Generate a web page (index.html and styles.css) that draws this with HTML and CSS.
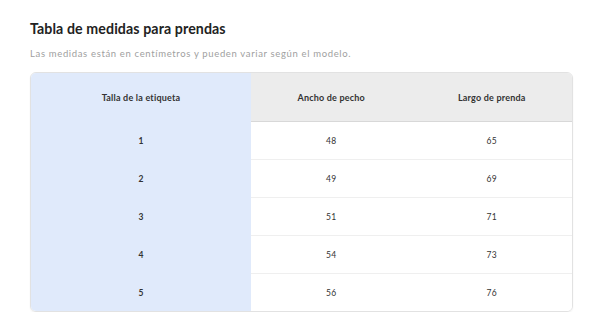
FILE: index.html
```html
<!DOCTYPE html>
<html lang="es">
<head>
<meta charset="utf-8">
<link rel="stylesheet" href="styles.css">
</head>
<body>
<div class="page">
  <h1 class="title">Tabla de medidas para prendas</h1>
  <p class="subtitle">Las medidas están en centímetros y pueden variar según el modelo.</p>
  <div class="table">
    <div class="cell head first">Talla de la etiqueta</div>
    <div class="cell head">Ancho de pecho</div>
    <div class="cell head">Largo de prenda</div>

    <div class="cell first">1</div><div class="cell">48</div><div class="cell">65</div>
    <div class="cell first">2</div><div class="cell">49</div><div class="cell">69</div>
    <div class="cell first">3</div><div class="cell">51</div><div class="cell">71</div>
    <div class="cell first">4</div><div class="cell">54</div><div class="cell">73</div>
    <div class="cell first last">5</div><div class="cell last">56</div><div class="cell last">76</div>
  </div>
</div>
</body>
</html>
```
FILE: styles.css
```css
html, body {
  margin: 0;
  padding: 0;
  background: #ffffff;
}
.page {
  padding: 20px 27px 0 30px;
  font-family: Lato, "Open Sans", sans-serif;
  color: #2b2b2b;
}
.title {
  margin: 0;
  font-size: 14.2px;
  font-weight: 700;
  line-height: 18px;
  letter-spacing: 0.1px;
  color: #222;
}
.subtitle {
  margin: 10px 0 0 0;
  font-size: 9.5px;
  font-weight: 400;
  line-height: 12px;
  letter-spacing: 0.65px;
  color: #a0a0a0;
}
.table {
  margin-top: 12px;
  display: grid;
  grid-template-columns: 220px 1fr 1fr;
  border: 1px solid #e2e2e2;
  border-radius: 6px;
  overflow: hidden;
  box-shadow: 0 1px 2px rgba(0,0,0,0.06);
}
.cell {
  height: 37px;
  display: flex;
  align-items: center;
  justify-content: center;
  font-size: 8.5px;
  letter-spacing: 0.2px;
  color: #333;
  border-bottom: 1px solid #efefef;
  background: #fff;
}
.cell.head {
  height: 48px;
  background: #ececec;
  font-size: 9px;
  font-weight: 700;
  border-bottom: 1px solid #d8d8d8;
}
.cell.first {
  background: #e0eafb;
  font-weight: 700;
  border-bottom-color: #e0eafb;
}
.cell.last {
  border-bottom: none;
}
```
